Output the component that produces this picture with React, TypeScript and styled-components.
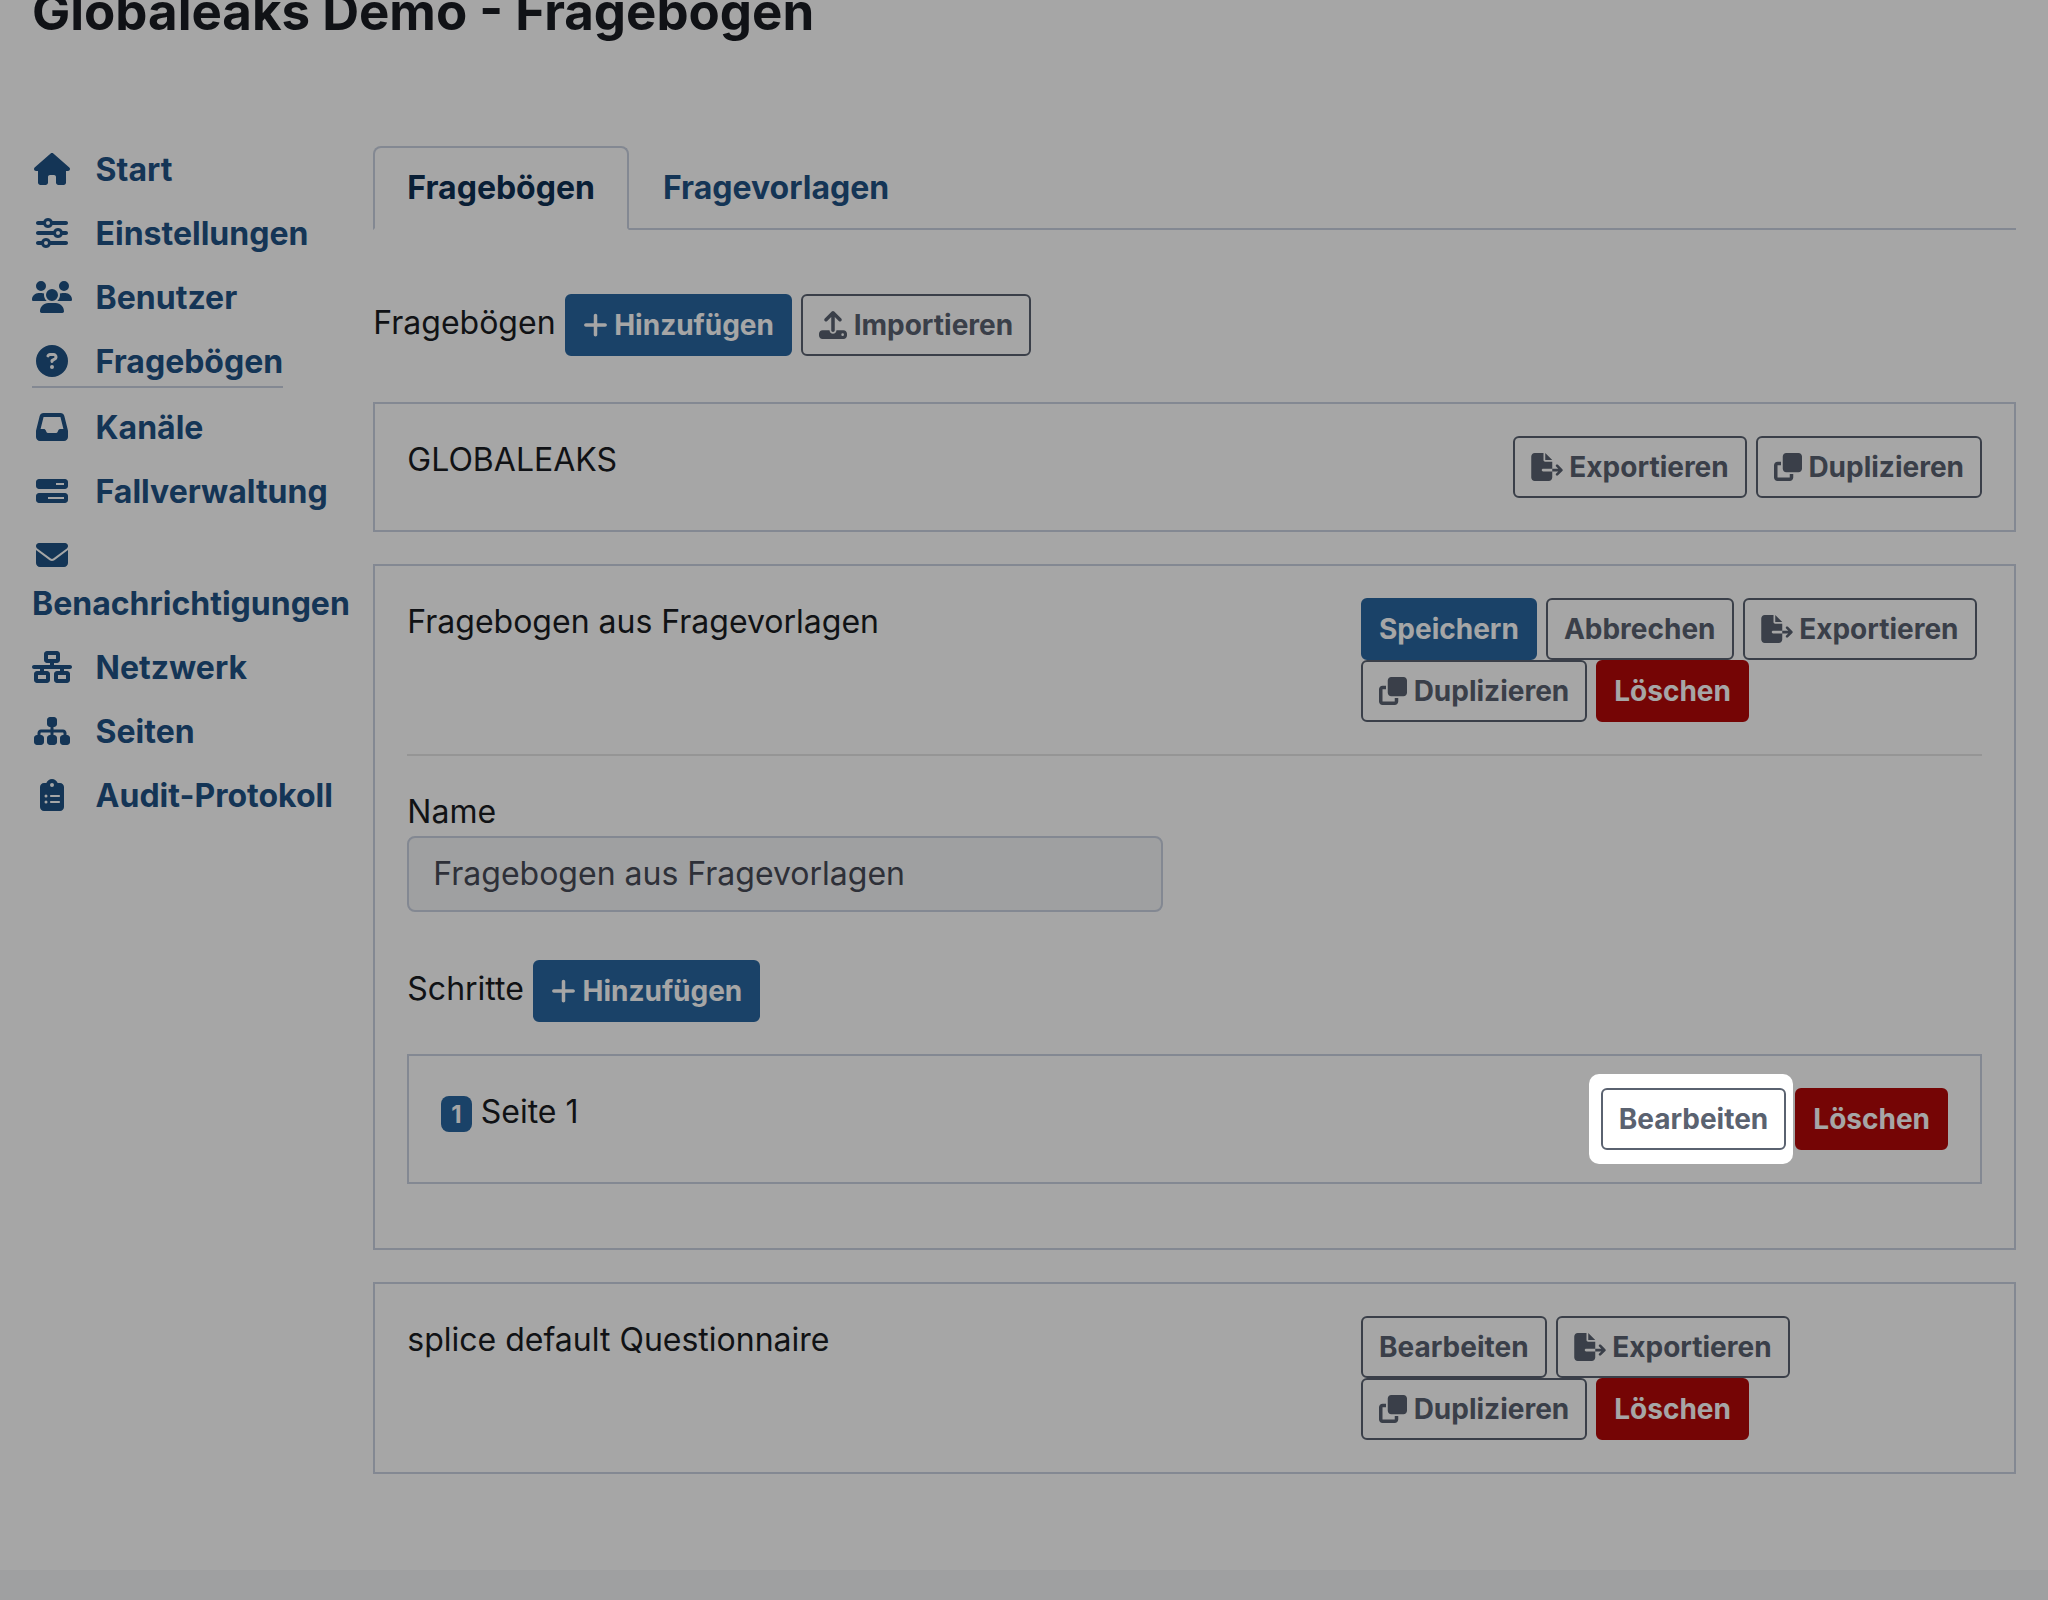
import React from 'react';
import styled, { createGlobalStyle, css } from 'styled-components';
import type { IconType } from 'react-icons';
import {
  FaHouse,
  FaSliders,
  FaUsers,
  FaCircleQuestion,
  FaInbox,
  FaBarsProgress,
  FaEnvelope,
  FaNetworkWired,
  FaSitemap,
  FaClipboardList,
  FaPlus,
  FaUpload,
  FaFileExport,
  FaClone,
} from 'react-icons/fa6';

const color = {
  text: '#1a1c22',
  link: '#1f5284',
  active: '#0f3053',
  primary: '#2866a0',
  danger: '#b40909',
  secondary: '#5a6270',
  border: '#c9d1e0',
  muted: '#f4f6f8',
};

const GlobalStyle = createGlobalStyle`
  *, *::before, *::after { box-sizing: border-box; }
  body {
    margin: 0;
    background: #fff;
    color: ${color.text};
    font-family: Inter, "Liberation Sans", sans-serif;
    font-size: 32px;
    line-height: 48px;
  }
`;

const Page = styled.div`
  display: flex;
  flex-direction: column;
  min-height: 100vh;
  overflow: hidden;
`;

const Title = styled.h1`
  margin: -18px 32px 96px;
  font-size: 51px;
  line-height: 60px;
  font-weight: 700;
`;

const Columns = styled.div`
  display: grid;
  grid-template-columns: minmax(0, 1fr) minmax(0, 5fr);
  padding-bottom: 96px;
`;

const Sidebar = styled.nav`
  padding-left: 32px;
`;

const NavList = styled.ul`
  margin: 0;
  padding: 0;
  list-style: none;
`;

const NavItem = styled.li`
  padding: 8px 0;
`;

const NavLink = styled.a<{ $current?: boolean }>`
  display: inline-block;
  color: ${color.link};
  font-weight: 700;
  text-decoration: none;
  vertical-align: top;
  ${(p) => p.$current && css`border-bottom: 2px solid ${color.border};`}

  svg {
    width: 40px;
    height: 32px;
    margin-right: 16px;
    vertical-align: -4px;
  }
`;

const Main = styled.main`
  padding: 8px 32px 0;
`;

const Tabs = styled.div`
  display: flex;
  border-bottom: 2px solid ${color.border};
`;

const Tab = styled.button<{ $active?: boolean }>`
  margin: 0 0 -2px;
  padding: 16px 32px;
  border: 2px solid transparent;
  border-radius: 8px 8px 0 0;
  background: none;
  color: ${color.link};
  font: inherit;
  font-weight: 700;
  ${(p) =>
    p.$active &&
    css`
      border-color: ${color.border} ${color.border} #fff;
      background: #fff;
      color: ${color.active};
    `}
`;

const Panel = styled.div`
  padding-top: 64px;
`;

const Button = styled.button<{ $kind?: 'primary' | 'danger' }>`
  padding: 8px 16px;
  border: 2px solid ${color.secondary};
  border-radius: 6px;
  background: #fff;
  color: ${color.secondary};
  font: inherit;
  font-size: 28px;
  line-height: 42px;
  font-weight: 700;
  white-space: nowrap;
  vertical-align: middle;
  ${(p) =>
    p.$kind &&
    css`
      border-color: ${color[p.$kind]};
      background: ${color[p.$kind]};
      color: #fff;
    `}
`;

const ButtonIcon = styled.span<{ $width: number }>`
  svg {
    width: ${(p) => p.$width}px;
    height: 28px;
    vertical-align: -4px;
  }
`;

const CardList = styled.div`
  display: flex;
  flex-direction: column;
  gap: 32px;
  margin-top: 46px;
`;

const Card = styled.section`
  padding: 32px;
  border: 2px solid ${color.border};
`;

const CardHead = styled.div`
  display: flex;
  align-items: flex-start;
  justify-content: space-between;
  gap: 32px;
`;

const CardTitle = styled.div`
  display: flex;
  align-items: baseline;
  gap: 9px;
`;

const Actions = styled.div`
  display: flex;
  flex-wrap: wrap;
  column-gap: 9px;
  max-width: 621px;
`;

const Rule = styled.hr`
  margin: 32px 0;
  border: 0;
  border-top: 2px solid #e5e5e5;
`;

const Field = styled.div`
  display: flex;
  flex-direction: column;
  width: 48%;
  margin-bottom: 48px;
`;

const TextInput = styled.input`
  width: 100%;
  padding: 12px 24px;
  border: 2px solid ${color.border};
  border-radius: 8px;
  background: ${color.muted};
  color: #474b56;
  font: inherit;
`;

const Steps = styled.div`
  margin: 32px 0;
`;

const Badge = styled.span`
  padding: 7px 10px 5px;
  border-radius: 8px;
  background: ${color.primary};
  color: #fff;
  font-size: 24px;
  line-height: 24px;
  font-weight: 700;
`;

/* Dims the whole page except for a rounded window around its child. */
const Spotlight = styled.span`
  position: relative;
  display: flex;

  &::after {
    content: '';
    position: absolute;
    z-index: 10;
    inset: -14px -7px -14px -12px;
    border-radius: 10px;
    box-shadow: 0 0 0 3000px rgba(0, 0, 0, 0.35);
    pointer-events: none;
  }
`;

const Footer = styled.footer`
  flex: 1;
  min-height: 30px;
  background: ${color.muted};
`;

const navigation: { label: string; icon: IconType; current?: boolean }[] = [
  { label: 'Start', icon: FaHouse },
  { label: 'Einstellungen', icon: FaSliders },
  { label: 'Benutzer', icon: FaUsers },
  { label: 'Fragebögen', icon: FaCircleQuestion, current: true },
  { label: 'Kanäle', icon: FaInbox },
  { label: 'Fallverwaltung', icon: FaBarsProgress },
  { label: 'Benachrichtigungen', icon: FaEnvelope },
  { label: 'Netzwerk', icon: FaNetworkWired },
  { label: 'Seiten', icon: FaSitemap },
  { label: 'Audit-Protokoll', icon: FaClipboardList },
];

const AddButton = () => (
  <Button type="button" $kind="primary">
    <ButtonIcon $width={25}>
      <FaPlus aria-hidden />
    </ButtonIcon>{' '}
    Hinzufügen
  </Button>
);

const ImportButton = () => (
  <Button type="button">
    <ButtonIcon $width={28}>
      <FaUpload aria-hidden />
    </ButtonIcon>{' '}
    Importieren
  </Button>
);

const ExportButton = () => (
  <Button type="button">
    <ButtonIcon $width={32}>
      <FaFileExport aria-hidden />
    </ButtonIcon>{' '}
    Exportieren
  </Button>
);

const DuplicateButton = () => (
  <Button type="button">
    <ButtonIcon $width={28}>
      <FaClone aria-hidden />
    </ButtonIcon>{' '}
    Duplizieren
  </Button>
);

const DeleteButton = () => (
  <Button type="button" $kind="danger">
    Löschen
  </Button>
);

export default function App() {
  return (
    <>
      <GlobalStyle />
      <Page>
        <Title>Globaleaks Demo - Fragebögen</Title>
        <Columns>
          <Sidebar>
            <NavList>
              {navigation.map(({ label, icon: Icon, current }) => (
                <NavItem key={label}>
                  <NavLink href="#" $current={current} aria-current={current ? 'page' : undefined}>
                    <Icon aria-hidden /> {label}
                  </NavLink>
                </NavItem>
              ))}
            </NavList>
          </Sidebar>
          <Main>
            <Tabs role="tablist">
              <Tab type="button" role="tab" aria-selected $active>
                Fragebögen
              </Tab>
              <Tab type="button" role="tab" aria-selected={false}>
                Fragevorlagen
              </Tab>
            </Tabs>
            <Panel role="tabpanel">
              <div>
                <span>Fragebögen</span> <AddButton /> <ImportButton />
              </div>
              <CardList>
                <Card>
                  <CardHead>
                    <CardTitle>GLOBALEAKS</CardTitle>
                    <Actions>
                      <ExportButton />
                      <DuplicateButton />
                    </Actions>
                  </CardHead>
                </Card>
                <Card>
                  <CardHead>
                    <CardTitle>Fragebogen aus Fragevorlagen</CardTitle>
                    <Actions>
                      <Button type="button" $kind="primary">
                        Speichern
                      </Button>
                      <Button type="button">Abbrechen</Button>
                      <ExportButton />
                      <DuplicateButton />
                      <DeleteButton />
                    </Actions>
                  </CardHead>
                  <Rule />
                  <Field>
                    <label htmlFor="questionnaire-name">Name</label>
                    <TextInput
                      id="questionnaire-name"
                      type="text"
                      defaultValue="Fragebogen aus Fragevorlagen"
                    />
                  </Field>
                  <div>
                    <span>Schritte</span> <AddButton />
                  </div>
                  <Steps>
                    <Card>
                      <CardHead>
                        <CardTitle>
                          <Badge>1</Badge>
                          <span>Seite 1</span>
                        </CardTitle>
                        <Actions>
                          <Spotlight>
                            <Button type="button">Bearbeiten</Button>
                          </Spotlight>
                          <DeleteButton />
                        </Actions>
                      </CardHead>
                    </Card>
                  </Steps>
                </Card>
                <Card>
                  <CardHead>
                    <CardTitle>splice default Questionnaire</CardTitle>
                    <Actions>
                      <Button type="button">Bearbeiten</Button>
                      <ExportButton />
                      <DuplicateButton />
                      <DeleteButton />
                    </Actions>
                  </CardHead>
                </Card>
              </CardList>
            </Panel>
          </Main>
        </Columns>
        <Footer />
      </Page>
    </>
  );
}
